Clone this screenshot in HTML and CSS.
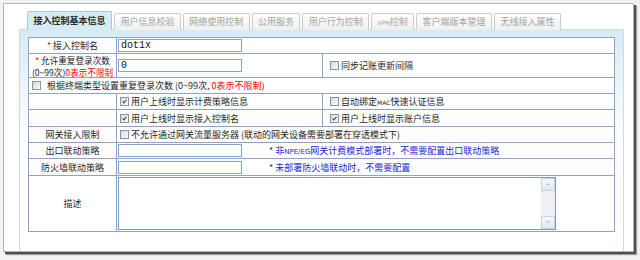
FILE: index.html
```html
<!DOCTYPE html>
<html lang="zh-CN">
<head>
<meta charset="utf-8">
<title>接入控制基本信息</title>
<link rel="stylesheet" href="styles.css">
</head>
<body>
<div class="window">
  <ul class="tabs">
    <li class="tab active">接入控制基本信息</li>
    <li class="tab">用户信息校验</li>
    <li class="tab">网络使用控制</li>
    <li class="tab">公用服务</li>
    <li class="tab">用户行为控制</li>
    <li class="tab"><span class="lat">VPN</span>控制</li>
    <li class="tab">客户端版本管理</li>
    <li class="tab">无线接入属性</li>
  </ul>
  <div class="panel">
    <div class="form">
      <div class="cell label"><span class="req">*</span>&nbsp;接入控制名</div>
      <div class="cell field span2"><span class="input">dot1x</span></div>

      <div class="cell label multi"><span class="line"><span class="req">*</span> 允许重复登录次数</span><span class="line">(0~99次)<span class="red">0表示不限制</span></span></div>
      <div class="cell field"><span class="input">0</span></div>
      <div class="cell opt"><span class="cb"></span><span class="txt">同步记账更新间隔</span></div>

      <div class="cell span3 wide"><span class="cb"></span><span class="txt gap">根据终端类型设置重复登录次数 (0~99次, <span class="red">0表示不限制</span>)</span></div>

      <div class="cell label"></div>
      <div class="cell field chk"><span class="cb on"><svg viewBox="0 0 9 9"><path d="M2 4.3 L3.8 6.2 L7 2.4"/></svg></span><span class="txt">用户上线时显示计费策略信息</span></div>
      <div class="cell opt"><span class="cb"></span><span class="txt">自动绑定<span class="lat">MAC</span>快速认证信息</span></div>

      <div class="cell label"></div>
      <div class="cell field chk"><span class="cb on"><svg viewBox="0 0 9 9"><path d="M2 4.3 L3.8 6.2 L7 2.4"/></svg></span><span class="txt">用户上线时显示接入控制名</span></div>
      <div class="cell opt"><span class="cb on"><svg viewBox="0 0 9 9"><path d="M2 4.3 L3.8 6.2 L7 2.4"/></svg></span><span class="txt">用户上线时显示账户信息</span></div>

      <div class="cell label">网关接入限制</div>
      <div class="cell field chk span2"><span class="cb"></span><span class="txt">不允许通过网关流量服务器 (联动的网关设备需要部署在穿透模式下)</span></div>

      <div class="cell label">出口联动策略</div>
      <div class="cell field span2"><span class="input"></span><span class="hint">* 非<span class="lat">NPE/EG</span>网关计费模式部署时，不需要配置出口联动策略</span></div>

      <div class="cell label">防火墙联动策略</div>
      <div class="cell field span2"><span class="input"></span><span class="hint">* 未部署防火墙联动时，不需要配置</span></div>

      <div class="cell label">描述</div>
      <div class="cell area span2">
        <div class="textarea">
          <div class="scrollbar">
            <span class="sbtn up"></span>
            <span class="track"></span>
            <span class="sbtn down"></span>
          </div>
        </div>
      </div>
    </div>
  </div>
</div>
</body>
</html>
```
FILE: styles.css
```css
html, body {
  margin: 0;
  padding: 0;
}
body {
  width: 640px;
  height: 260px;
  overflow: hidden;
  background: #f2f2f2;
  font-family: "Noto Sans CJK SC", "Liberation Sans", sans-serif;
  font-size: 9px;
  color: #1e1e1e;
}
.window {
  box-sizing: border-box;
  margin: 3px 0 0 3px;
  width: 631px;
  height: 249px;
  background: #fff;
  border: 1px solid #b4b4b4;
  box-shadow: 2px 2px 0 #4e4e4e, 3px 3px 1px #a0a0a0;
  padding: 7px 9px 0 15px;
  display: flex;
  flex-direction: column;
}
.tabs {
  list-style: none;
  margin: 0 0 -1px 8px;
  padding: 0;
  display: flex;
  align-items: flex-end;
  gap: 2px;
  height: 19px;
  position: relative;
  z-index: 1;
}
.tab {
  box-sizing: border-box;
  height: 17px;
  padding: 0 5.4px;
  border: 1px solid #cdcdcd;
  border-bottom: none;
  border-radius: 2px 2px 0 0;
  background: linear-gradient(#ffffff, #efefef);
  color: #a3a3a3;
  line-height: 16px;
  white-space: nowrap;
}
.tab.active {
  height: 19px;
  line-height: 17px;
  background: #d6ebf3;
  border-color: #afcad7;
  color: #2a2a2a;
  font-weight: bold;
  padding: 0 5.5px;
}
.lat {
  font-family: "DejaVu Sans", sans-serif;
  font-size: 6px;
}
.panel {
  flex: 1;
  border: 1px solid #c6dde8;
  border-bottom: none;
  background: linear-gradient(#d6ebf3, #eef6fa 60px, #ffffff 110px);
  padding: 7px 8px 0 8px;
}
.form {
  box-sizing: border-box;
  width: 587px;
  display: grid;
  grid-template-columns: 87px 205px 291px;
  grid-template-rows: 15px 23px 15px 15px 16px 15px 15px 16px 55px;
  gap: 1px;
  padding: 1px;
  background: #8ea4c6;
}
.cell {
  background: #fff;
  display: flex;
  align-items: center;
  white-space: nowrap;
  overflow: hidden;
}
.span2 { grid-column: span 2; }
.span3 { grid-column: span 3; }
.label {
  justify-content: center;
}
.label.multi {
  flex-direction: column;
  justify-content: center;
  font-size: 8.6px;
  line-height: 12px;
  overflow: visible;
}
.line { display: block; height: 12px; }
.req { color: #e00000; }
.red { color: #ff0000; }
.field { padding-left: 1px; }
.field.chk { padding-left: 3px; }
.opt { padding-left: 7px; }
.wide { padding-left: 3px; }
.input {
  box-sizing: border-box;
  display: block;
  width: 124px;
  height: 13px;
  border: 1px solid #8aa2c4;
  background: #fff;
  padding-left: 2px;
  font-family: "Liberation Mono", monospace;
  font-size: 10px;
  line-height: 11px;
  color: #111;
}
.cb {
  box-sizing: border-box;
  flex: none;
  width: 9px;
  height: 9px;
  border: 1px solid #8b9099;
  background: linear-gradient(135deg, #d9d9d9, #fbfbfb);
  display: inline-flex;
}
.cb svg {
  width: 7px;
  height: 7px;
}
.cb svg path {
  fill: none;
  stroke: #33507a;
  stroke-width: 1.4;
}
.txt { margin-left: 2px; }
.txt.gap { margin-left: 6px; }
.hint {
  margin-left: 27px;
  color: #2424d8;
}
.hint .lat { font-size: 7px; }
.area {
  align-items: flex-start;
  padding: 1px 0 0 1px;
}
.textarea {
  box-sizing: border-box;
  width: 438px;
  height: 53px;
  border: 1px solid #7f9db9;
  background: #fff;
  display: flex;
  justify-content: flex-end;
}
.scrollbar {
  width: 14px;
  display: flex;
  flex-direction: column;
  background: #eef0f6;
}
.track { flex: 1; }
.sbtn {
  box-sizing: border-box;
  height: 13px;
  border: 1px solid #c7d1e2;
  background: linear-gradient(#f6f8fc, #e1e7f1);
  position: relative;
}
.sbtn::after {
  content: "";
  position: absolute;
  left: 4px;
  top: 4px;
  border-left: 2px solid transparent;
  border-right: 2px solid transparent;
}
.sbtn.up::after { border-bottom: 2px solid #b9c2d2; }
.sbtn.down::after { border-top: 2px solid #b9c2d2; }
```
